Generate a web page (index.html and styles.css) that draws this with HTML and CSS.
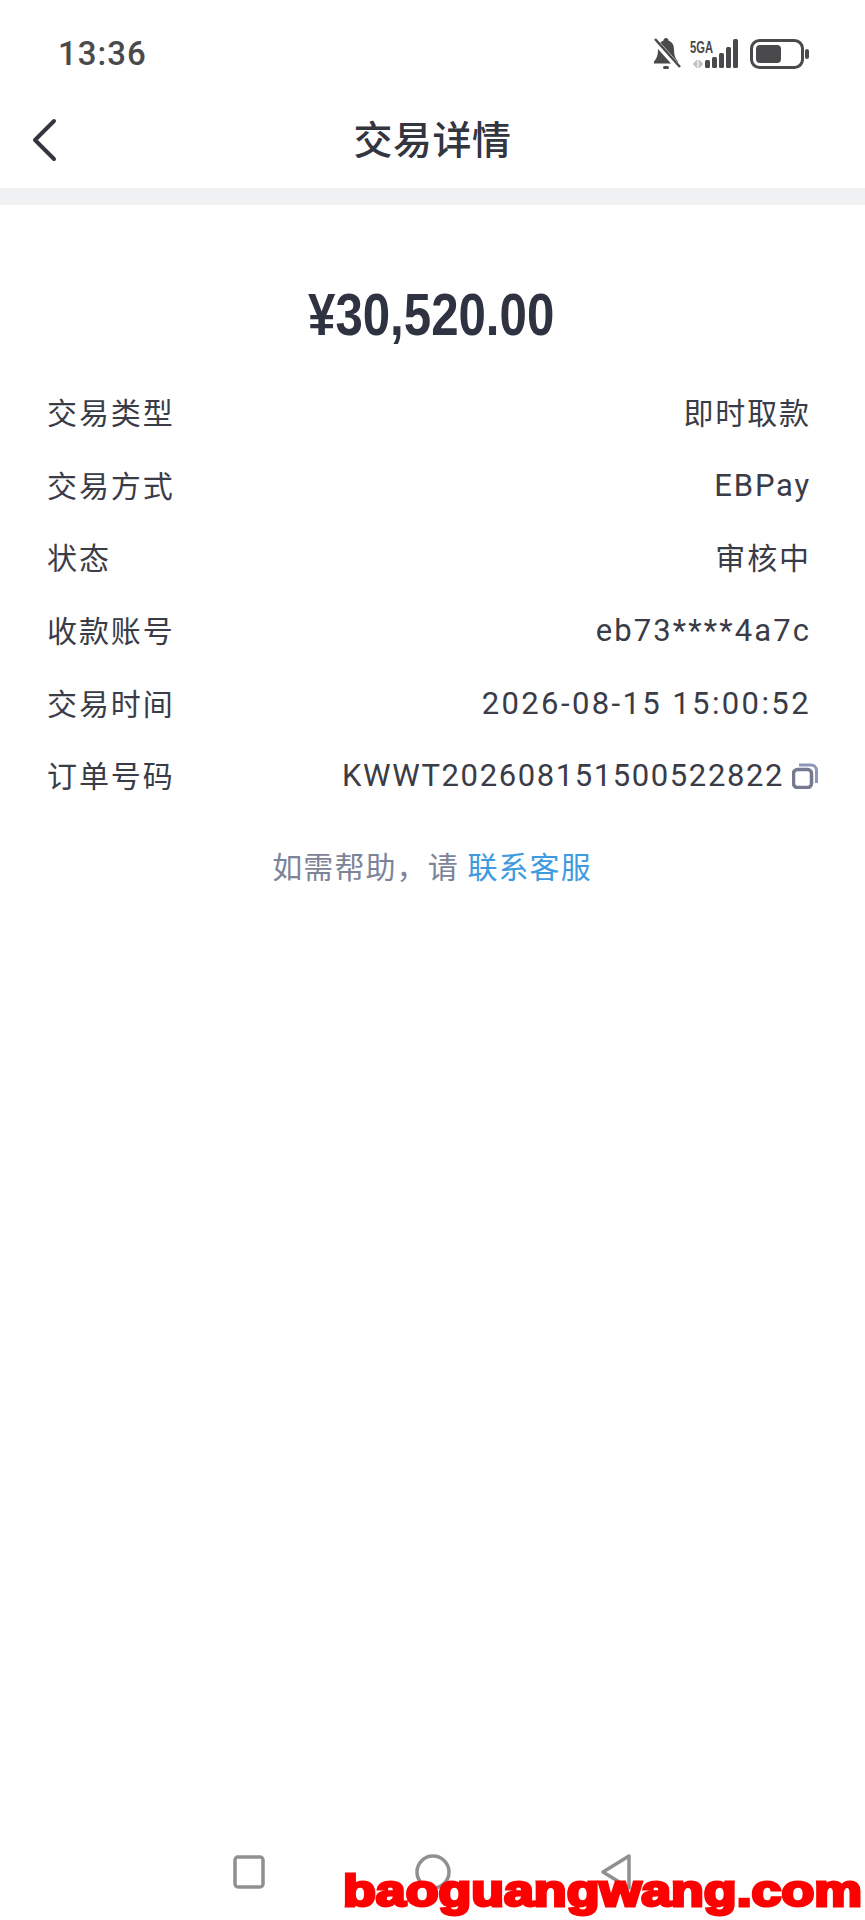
FILE: index.html
```html
<!DOCTYPE html>
<html lang="zh-CN">
<head>
    <meta charset="UTF-8">
    <meta name="viewport" content="width=device-width, initial-scale=1.0">
    <title>交易详情</title>
    <link rel="stylesheet" href="styles.css">
</head>
<body>
    <div class="pagina">
        <!-- Status bar -->
        <div class="status-bar">
            <span class="hora">13:36</span>
            <svg class="status-icones" width="162" height="36" viewBox="650 34 162 36">
                <path d="M666 37c1.500 0 2.500 1 2.500 2.500 4 1.500 5.500 5 5.500 9 0 5 1 9 4 12v2h-24v-2c3-3 4-7 4-12 0-4 1.500-7.500 5.500-9 0-1.500 1-2.500 2.500-2.500z" fill="#4a4a4c"/>
                <rect x="663" y="65" width="6" height="3" rx="1.500" fill="#4a4a4c"/>
                <path d="M654 39l25 28" stroke="#fff" stroke-width="6"/>
                <path d="M655 38l25 28" stroke="#4a4a4c" stroke-width="2.500"/>
                <text class="texto-5g" x="690" y="52" textLength="23" lengthAdjust="spacingAndGlyphs">5GA</text>
                <path d="M697 59v8l-4-4zM699 59v8l4-4z" fill="#c4c4c4" stroke="#c4c4c4" stroke-width="1"/>
                <rect x="705" y="59" width="5" height="8" rx="1.500" fill="#4a4a4c"/>
                <rect x="712" y="56" width="5" height="11" rx="1.500" fill="#4a4a4c"/>
                <rect x="719" y="52" width="5" height="15" rx="1.500" fill="#4a4a4c"/>
                <rect x="726" y="46" width="5" height="21" rx="1.500" fill="#4a4a4c"/>
                <rect x="733" y="38" width="5" height="29" rx="1.500" fill="#4a4a4c"/>
                <rect x="751.500" y="39.500" width="51" height="27" rx="8" fill="none" stroke="#4a4a4c" stroke-width="3"/>
                <rect x="756" y="44" width="25" height="18" rx="4" fill="#4a4a4c"/>
                <rect x="805" y="48" width="4" height="10" rx="2" fill="#4a4a4c"/>
            </svg>
        </div>

        <!-- Cabecalho -->
        <div class="cabecalho">
            <svg class="voltar" width="28" height="44" viewBox="0 0 28 44">
                <path d="M23 3L4 22l19 19" fill="none" stroke="#33353f" stroke-width="4" stroke-linecap="round" stroke-linejoin="round"/>
            </svg>
            <h1>交易详情</h1>
        </div>
        <div class="faixa"></div>

        <!-- Detalhes -->
        <div class="conteudo">
            <div class="valor"><span>¥30,520.00</span></div>

            <div class="linha"><span>交易类型</span><span>即时取款</span></div>
            <div class="linha"><span>交易方式</span><span class="latino">EBPay</span></div>
            <div class="linha"><span>状态</span><span>审核中</span></div>
            <div class="linha"><span>收款账号</span><span class="latino conta">eb73****4a7c</span></div>
            <div class="linha"><span>交易时间</span><span class="latino data">2026-08-15 15:00:52</span></div>
            <div class="linha">
                <span>订单号码</span>
                <span class="pedido">
                    <span class="latino numero">KWWT202608151500522822</span>
                    <svg class="copiar" width="26" height="26" viewBox="0 0 26 26">
                        <path d="M7 2h12a5.500 5.500 0 0 1 5.500 5.500V20" fill="none" stroke="#8f96b8" stroke-width="3"/>
                        <rect x="1.500" y="6.500" width="18" height="18" rx="4" fill="#fff" stroke="#757a90" stroke-width="3.500"/>
                    </svg>
                </span>
            </div>

            <p class="ajuda">如需帮助，请 <a href="#">联系客服</a></p>
        </div>

        <!-- Barra de navegacao -->
        <div class="barra-nav">
            <svg width="32" height="34" viewBox="0 0 32 34"><rect x="2" y="2" width="28" height="30" rx="3" fill="none" stroke="#8e9092" stroke-width="3.500"/></svg>
            <svg width="36" height="36" viewBox="0 0 36 36"><circle cx="18" cy="18" r="16" fill="none" stroke="#8e9092" stroke-width="3.500"/></svg>
            <svg width="30" height="36" viewBox="0 0 30 36"><path d="M28 2v32L2 18z" fill="none" stroke="#8e9092" stroke-width="3.500" stroke-linejoin="round"/></svg>
        </div>

        <div class="marca">baoguangwang.com</div>
    </div>
</body>
</html>
```

FILE: styles.css
```css
/* Estilos globais */
body {
    margin: 0;
    font-family: Roboto, "Noto Sans CJK SC", sans-serif;
    background-color: #fff;
    color: #3a3c47;
}

.pagina {
    position: relative;
    display: flex;
    flex-direction: column;
    height: 1920px;
    overflow: hidden;
}

/* Status bar */
.status-bar {
    display: flex;
    justify-content: space-between;
    align-items: center;
    height: 88px;
    padding: 0 53px 0 58px;
    flex-shrink: 0;
    box-sizing: border-box;
}

.hora {
    font-size: 33px;
    font-weight: 500;
    letter-spacing: 1px;
    color: #4a4a4c;
    margin-top: 18px;
}

.status-icones {
    margin-top: 18px;
}

.texto-5g {
    font-family: "Liberation Sans", sans-serif;
    font-size: 17px;
    font-weight: 700;
    fill: #4a4a4c;
}

/* Cabecalho */
.cabecalho {
    position: relative;
    display: flex;
    align-items: center;
    justify-content: center;
    height: 100px;
    flex-shrink: 0;
}

.cabecalho h1 {
    margin: -2px 0 0;
    font-size: 39px;
    letter-spacing: 0.5px;
    font-weight: 500;
    color: #33353f;
}

.voltar {
    position: absolute;
    left: 31px;
    top: 30px;
}

.faixa {
    height: 17px;
    background-color: #f0f1f3;
    flex-shrink: 0;
}

/* Detalhes */
.conteudo {
    padding: 74px 54px 0 47px;
}

.valor {
    height: 72px;
    margin-bottom: 24px;
    line-height: 72px;
    text-align: center;
    font-family: "Liberation Sans", sans-serif;
    font-size: 60px;
    font-weight: 700;
    color: #2f3240;
}

/* o valor e mais estreito que a fonte */
.valor span {
    display: inline-block;
    transform: scaleX(0.82);
    margin-left: 4px;
}

.linha {
    display: flex;
    justify-content: space-between;
    align-items: center;
    height: 72.6px;
    font-size: 30px;
    letter-spacing: 1.9px;
    color: #3a3c47;
}

.latino {
    margin-top: 3px;
    font-size: 31px;
    letter-spacing: 1.8px;
}

.conta {
    letter-spacing: 2.1px;
}

.data {
    letter-spacing: 2.4px;
}

.numero {
    letter-spacing: 1.6px;
}

.pedido {
    display: flex;
    align-items: center;
    gap: 8px;
    margin-right: -7px;
}

.copiar {
    margin-top: 3px;
}

.ajuda {
    margin: 32px 0 0 6px;
    line-height: 50px;
    text-align: center;
    font-size: 30px;
    letter-spacing: 1.1px;
    color: #7d8499;
}

.ajuda a {
    color: #3f9be0;
    text-decoration: none;
}

/* Barra de navegacao */
.barra-nav {
    display: flex;
    align-items: center;
    gap: 150px;
    margin-top: auto;
    padding: 0 0 30px 233px;
}

.marca {
    position: absolute;
    left: 343px;
    top: 1865px;
    font-family: "Liberation Sans", sans-serif;
    font-size: 44px;
    line-height: 52px;
    font-weight: 700;
    color: #fe0000;
    -webkit-text-stroke: 3px #fe0000;
    white-space: nowrap;
    transform: scaleX(1.22);
    transform-origin: left top;
}
```
